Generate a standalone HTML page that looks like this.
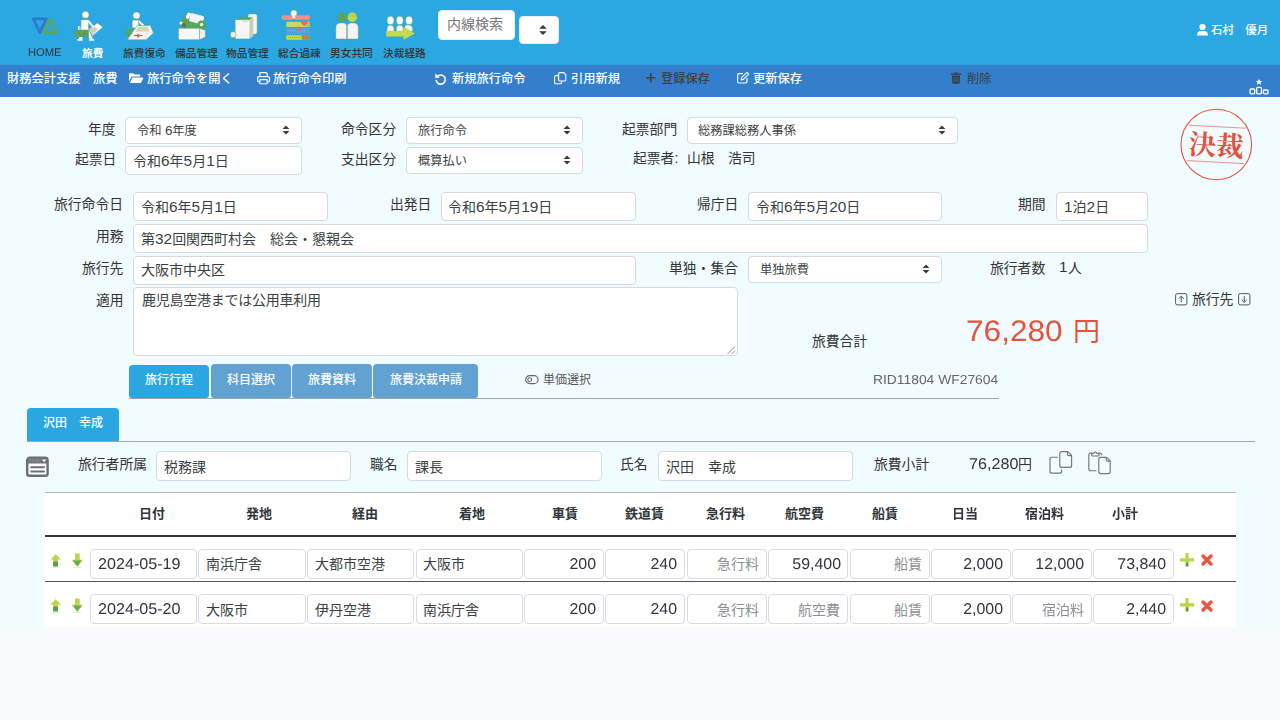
<!DOCTYPE html>
<html lang="ja"><head><meta charset="utf-8"><title>旅費 - 旅行命令</title><style>
html,body{margin:0;padding:0}
body{width:1280px;height:720px;overflow:hidden;position:relative;background:#f0fcff;font-family:"Liberation Sans",sans-serif}
.t{position:absolute;white-space:nowrap}
.t svg{position:absolute;left:0;top:0;display:block;overflow:visible}
.t svg text{font-family:"Liberation Sans","Noto Sans CJK JP",sans-serif;white-space:pre}
.t svg text.serif{font-family:"Liberation Serif","Noto Serif CJK SC",serif}
.a{will-change:transform}
.a text{text-rendering:geometricPrecision;white-space:pre}
.box{position:absolute;box-sizing:border-box;background:#fff;border:1px solid #d3dae0;border-radius:4px}
.tb{border-color:#d5dce4}
.i{position:absolute;display:block;overflow:visible}
</style></head>
<body>
<div style="position:absolute;left:0px;top:0px;width:1280px;height:65px;background:#2ba8e1;"></div>
<div style="position:absolute;left:0px;top:65px;width:1280px;height:32px;background:#337fcc;"></div>
<div style="position:absolute;left:0px;top:627px;width:1280px;height:93px;background:#f8fafc;"></div>
<svg class="i" style="left:28px;top:14px" width="34" height="24" viewBox="28 14 34 24" ><g fill="none" stroke-width="2.7" stroke-linejoin="round"><path d="M33.4 18.9H46.2L39.8 32.6Z" stroke="#2f78d0"/><path d="M50 19.4L56.7 32.7H43.3Z" stroke="#5aa75c"/></g></svg>
<svg class="i a" style="left:28.00px;top:56.30px" width="1" height="1"><text x="0" y="0" font-size="11.2" fill="#333" text-anchor="start">HOME</text></svg>
<div class="t " style="left:81.55px;top:46.50px;width:21.40px;height:13.91px;"><svg width="21.40" height="13.91" fill="#fff"><text x="0" y="10.16" font-size="10.7" font-weight="bold">旅費</text></svg></div>
<div class="t " style="left:122.60px;top:46.50px;width:42.80px;height:13.91px;"><svg width="42.80" height="13.91" fill="#333"><text x="0" y="10.16" font-size="10.7" font-weight="500">旅費復命</text></svg></div>
<div class="t " style="left:174.60px;top:46.50px;width:42.80px;height:13.91px;"><svg width="42.80" height="13.91" fill="#333"><text x="0" y="10.16" font-size="10.7" font-weight="500">備品管理</text></svg></div>
<div class="t " style="left:226.10px;top:46.50px;width:42.80px;height:13.91px;"><svg width="42.80" height="13.91" fill="#333"><text x="0" y="10.16" font-size="10.7" font-weight="500">物品管理</text></svg></div>
<div class="t " style="left:278.30px;top:46.50px;width:42.80px;height:13.91px;"><svg width="42.80" height="13.91" fill="#333"><text x="0" y="10.16" font-size="10.7" font-weight="500">総合過疎</text></svg></div>
<div class="t " style="left:330.10px;top:46.50px;width:42.80px;height:13.91px;"><svg width="42.80" height="13.91" fill="#333"><text x="0" y="10.16" font-size="10.7" font-weight="500">男女共同</text></svg></div>
<div class="t " style="left:382.60px;top:46.50px;width:42.80px;height:13.91px;"><svg width="42.80" height="13.91" fill="#333"><text x="0" y="10.16" font-size="10.7" font-weight="500">決裁経路</text></svg></div>
<svg class="i" style="left:70px;top:8px" width="350" height="35" viewBox="70 8 350 35" ><g><path d="M97.4 22.9L103 27.1L92.5 35.9L89 29.2Z" fill="#fbfbfb" stroke="#4f9d52" stroke-width="0.45"/><path d="M93.6 25.6L97.8 29.6L92.6 35.2L89.6 29.4Z" fill="#cfd1cf"/><path d="M91 28.4l4.4 4.6M92.6 27l4.2 4.4M90.6 31l4.6-4.6M92 33.2l4.8-4.8" stroke="#b9bbb9" stroke-width="0.35"/><circle cx="92.5" cy="30.5" r="0.75" fill="#d9e23c"/><path d="M84.6 29L80.2 39.4" stroke="#fafafa" stroke-width="3" stroke-linecap="butt"/><path d="M86.8 29L91.4 39.4" stroke="#fafafa" stroke-width="3" stroke-linecap="butt"/><path d="M77.4 39h5.2v1.8h-5.2zM89.2 39h5v1.8h-5z" fill="#fafafa"/><path d="M80.9 20.7q0-1 1-1h5.6q1.1 0 1.1 1.1v9.2h-7.7z" fill="#fafafa" stroke="#4f9d52" stroke-width="0.45"/><path d="M84 20.4v9" stroke="#dfe6df" stroke-width="0.4"/><path d="M88.6 21.4L93.4 27.2" stroke="#fafafa" stroke-width="2" stroke-linecap="round"/><circle cx="85.5" cy="14.8" r="3.55" fill="#fafafa" stroke="#4f9d52" stroke-width="0.45"/><path d="M78.4 30v-3q0-0.6 0.6-0.6h0.4q0.5 0 0.5 0.6v3" fill="none" stroke="#fafafa" stroke-width="0.9"/><rect x="74.6" y="29.9" width="14.2" height="7" rx="0.6" fill="#5ba55b"/><circle cx="79.5" cy="33.4" r="0.7" fill="#7d5b7a"/><circle cx="84.4" cy="33.4" r="0.7" fill="#7d5b7a"/></g><g><path d="M138.4 21L143.2 25.2" stroke="#fafafa" stroke-width="1.9" stroke-linecap="round"/><path d="M132.2 21q0-1 1-1h4.4q1 0 1 1v7h-6.4z" fill="#fafafa" stroke="#4f9d52" stroke-width="0.45"/><circle cx="136.5" cy="15.5" r="3.55" fill="#fafafa" stroke="#4f9d52" stroke-width="0.45"/><path d="M126.3 29.9L131.2 27.8L133.3 29.2L129.1 37L126.3 35.6Z" fill="#5ba55b"/><path d="M136.8 26L150.2 25.3L153.3 32.7L145.6 39.8H127.3Z" fill="#f6f6f6" stroke="#4f9d52" stroke-width="0.45"/><path d="M138 27.1L148 26.8L149.4 31.6L135.6 31.8Z" fill="#d3d5d3"/><circle cx="140.4" cy="27.9" r="0.6" fill="#d9e23c"/><circle cx="143.6" cy="27.7" r="0.6" fill="#d9e23c"/><circle cx="146.6" cy="27.6" r="0.6" fill="#d9e23c"/><circle cx="139.4" cy="30.4" r="0.6" fill="#d9e23c"/><circle cx="143.4" cy="30.2" r="0.6" fill="#d9e23c"/><circle cx="146" cy="29.2" r="0.6" fill="#d9e23c"/><circle cx="147.6" cy="30.4" r="0.6" fill="#d9e23c"/><circle cx="141.6" cy="29.2" r="0.6" fill="#d9e23c"/><path d="M145.6 39.8L145.8 33.6L153.3 32.7Z" fill="#fdfdfd" stroke="#c5c8c5" stroke-width="0.35"/><circle cx="147.2" cy="33.4" r="0.5" fill="#d9e23c"/><path d="M138.2 33.2l0.8 1.5 3.6 0.5v0.7l-3.6 0.4-0.5 1.4h-0.8l-0.4-1.4-3.4-0.4v-0.7l3.4-0.5z" fill="#e8533c"/></g><g><path d="M179.8 26.6q-0.4-4 2.6-7.4 2.2-3.4 5-5.6l4.4-1.4 11 5.2 0.6 5 2.4 2.2v3.4l-5 0.8z" fill="#5ba55b"/><ellipse cx="188.3" cy="15.8" rx="2" ry="3.3" transform="rotate(24 188.3 15.8)" fill="#fdfdfd"/><rect x="189.6" y="14.4" width="14" height="8.6" rx="1.6" transform="rotate(15 196.6 18.7)" fill="#f3f3f3"/><circle cx="201.6" cy="24.6" r="4.1" fill="#5ba55b"/><circle cx="201.6" cy="24.6" r="1.7" fill="#fdfdfd"/><circle cx="180.9" cy="22.9" r="1.5" fill="#fdfdfd"/><circle cx="184" cy="25.3" r="2.1" fill="#5f6361"/><circle cx="184" cy="25.3" r="0.8" fill="#8a8d8a"/><rect x="178.4" y="28.2" width="21.1" height="11.6" fill="#f7f7f7" stroke="#4f9d52" stroke-width="0.45"/><path d="M199.5 28.2L205.5 30.3V36.9L199.5 39.8Z" fill="#ededed" stroke="#4f9d52" stroke-width="0.45"/><path d="M199.5 28.2V39.8" stroke="#b5b8b5" stroke-width="0.5"/></g><g><rect x="248" y="14.1" width="9.2" height="20.2" rx="2.2" fill="#f4f4f4" stroke="#4f9d52" stroke-width="0.45"/><ellipse cx="252.6" cy="15.6" rx="4" ry="1.3" fill="#fdfdfd" stroke="#d2d5d2" stroke-width="0.3"/><path d="M235.4 20L239.3 17.3H253L249.5 20Z" fill="#5ba55b"/><path d="M249.5 20L253.3 17.5V36L249.5 38.7Z" fill="#c9cbc9"/><circle cx="251.4" cy="19.6" r="0.55" fill="#d9e23c"/><circle cx="251.4" cy="21.6" r="0.55" fill="#d9e23c"/><circle cx="251.4" cy="23.6" r="0.55" fill="#d9e23c"/><circle cx="251.4" cy="25.6" r="0.55" fill="#d9e23c"/><circle cx="251.4" cy="27.6" r="0.55" fill="#d9e23c"/><circle cx="251.4" cy="29.6" r="0.55" fill="#d9e23c"/><circle cx="251.4" cy="31.6" r="0.55" fill="#d9e23c"/><circle cx="251.4" cy="33.6" r="0.55" fill="#d9e23c"/><circle cx="251.4" cy="35.6" r="0.55" fill="#d9e23c"/><rect x="235.4" y="20" width="14.1" height="18.7" fill="#f7f7f7" stroke="#c9ccc9" stroke-width="0.4"/><path d="M242.4 21.4h6" stroke="#a9c6e2" stroke-width="0.7"/><path d="M237 23h2" stroke="#c9ccc9" stroke-width="0.4"/><path d="M236.4 35.4h12" stroke="#dcdedc" stroke-width="0.4"/><rect x="230.5" y="31.8" width="5.4" height="5.8" rx="1.8" fill="#efefef" stroke="#4f9d52" stroke-width="0.45"/></g><g><rect x="282" y="15.5" width="27.8" height="4.2" fill="#ee9189" stroke="#b9a3a0" stroke-width="0.4"/><path d="M282.4 20V38.4H286" fill="none" stroke="#4f9d52" stroke-width="0.7" stroke-dasharray="0.9 0.9"/><path d="M282.4 24.4h4M282.4 31h4" stroke="#4f9d52" stroke-width="0.7" stroke-dasharray="0.9 0.9"/><rect x="286.3" y="21.8" width="23.5" height="5.3" rx="1.2" fill="#c6dc56"/><path d="M306 21.8h3.8v5.3H306z" fill="#a8cf3c"/><rect x="286.3" y="28.2" width="23.5" height="5.6" rx="1.2" fill="#5f9fd9"/><path d="M288 31h20" stroke="#8fbde8" stroke-width="0.7" stroke-dasharray="1 2.2"/><rect x="286.3" y="35.2" width="23.5" height="4.6" rx="1" fill="#c8de3e"/><path d="M301.7 35.2h7.1q1 0 1 1v2.6q0 1-1 1h-7.1z" fill="#5aa85a"/><path d="M288 37.5h12.6" stroke="#7fb53e" stroke-width="1" stroke-dasharray="1.1 0.9"/><circle cx="293.8" cy="13.3" r="3" fill="#fbfbfb" stroke="#b7d24a" stroke-width="0.5"/><path d="M292.4 16h2.8v2.6h-2.8z" fill="#fbfbfb"/><path d="M292.6 18.8h2.4l-1.2 1.8z" fill="#4f9d52"/><path d="M304.2 26.2l-2.9-2.7q-0.8-1.7 0.7-2.4 1.3-0.3 2.2 1 0.9-1.3 2.2-1 1.5 0.7 0.7 2.4z" fill="#ee6a60"/><path d="M298.9 26.8l0.9 1.9 2 0.9-2 0.9-0.9 1.9-0.9-1.9-2-0.9 2-0.9z" fill="#ee6a60"/><path d="M305.4 34.4l2.8 3.1-2.8 3.1-2.8-3.1z" fill="#ee6a60"/></g><g><circle cx="342.5" cy="17.25" r="4.65" fill="#5ba55b"/><circle cx="352.4" cy="17.25" r="4.65" fill="#c9de4a"/><path d="M348.6 17.4l3.8-4.2M349.6 19.4l5.2-5.8M351.2 20.8l5-5.6M353.6 21.4l3-3.4M348.8 15l2.4 2.4M351 13.4l4.6 4.6M353.6 13.4l3 3" stroke="#9fc63a" stroke-width="0.6"/><path d="M335.8 39V27.6q0-4.7 4.7-4.7h2.6q3.6 0 3.6 3.2V39Z" fill="#f4f4f4" stroke="#4f9d52" stroke-width="0.45"/><path d="M347.4 39V26.1q0-3.2 3.6-3.2h2.6q4.7 0 4.7 4.7V39Z" fill="#f4f4f4" stroke="#4f9d52" stroke-width="0.45"/><path d="M347.05 25V39" stroke="#bfc2bf" stroke-width="0.6"/></g><g><path d="M387 31.6v-3.4q0-2.4 2.2-2.9h2.6q2.2 0.5 2.2 2.9v3.4z" fill="#f4f4f4" stroke="#4f9d52" stroke-width="0.45"/><ellipse cx="390.5" cy="20.4" rx="3.5" ry="4.2" fill="#f6f6f6" stroke="#4f9d52" stroke-width="0.45"/><path d="M396.25 31.6v-3.4q0-2.4 2.2-2.9h2.6q2.2 0.5 2.2 2.9v3.4z" fill="#f4f4f4" stroke="#4f9d52" stroke-width="0.45"/><ellipse cx="399.75" cy="20.4" rx="3.5" ry="4.2" fill="#f6f6f6" stroke="#4f9d52" stroke-width="0.45"/><path d="M405.6 31.6v-3.4q0-2.4 2.2-2.9h2.6q2.2 0.5 2.2 2.9v3.4z" fill="#f4f4f4" stroke="#4f9d52" stroke-width="0.45"/><ellipse cx="409.1" cy="20.4" rx="3.5" ry="4.2" fill="#f6f6f6" stroke="#4f9d52" stroke-width="0.45"/><path d="M405.6 25.3h2.6q2.2 0.5 2.2 2.9v5h-7z" fill="#f4f4f4"/><path d="M386.25 31H403.6V27.1L414.8 33.5L403.6 39.8V36.6H386.25Z" fill="#c4db50" stroke="#a9c83c" stroke-width="0.3"/></g></svg>
<div class="box" style="left:438px;top:10px;width:76.5px;height:30px;border-color:#e8eef2;"></div>
<div class="t " style="left:447.00px;top:16.22px;width:56.00px;height:18.20px;"><svg width="56.00" height="18.20" fill="#777"><text x="0" y="13.3" font-size="14">内線検索</text></svg></div>
<div class="box" style="left:519px;top:16px;width:40px;height:28px;border-color:#e8eef2;"></div>
<svg class="i" style="left:536.75px;top:22.3px" width="12" height="16" viewBox="536.75 22.3 12 16" ><path d="M542.75 25.4L546.55 29.1H538.95ZM542.75 35.2L546.55 31.5H538.95Z" fill="#343a40"/></svg>
<svg class="i" style="left:1197px;top:24.4px" width="11" height="11.6" viewBox="0 0 11 11.6" ><circle cx="5.5" cy="3.1" r="3.1" fill="#fff"/><path d="M0 11.6q0-4.4 3.6-4.6h3.8q3.6 0.2 3.6 4.6z" fill="#fff"/></svg>
<div class="t " style="left:1210.60px;top:22.77px;width:57.25px;height:14.88px;"><svg width="57.25" height="14.88" fill="#fff"><text x="0" y="10.88" font-size="11.45" font-weight="500">石村　優月</text></svg></div>
<div class="t " style="left:7.40px;top:70.92px;width:73.50px;height:15.93px;"><svg width="73.50" height="15.93" fill="#fff"><text x="0" y="11.64" font-size="12.25" font-weight="500">財務会計支援</text></svg></div>
<div class="t " style="left:92.60px;top:70.92px;width:24.50px;height:15.93px;"><svg width="24.50" height="15.93" fill="#fff"><text x="0" y="11.64" font-size="12.25" font-weight="500">旅費</text></svg></div>
<svg class="i" style="left:129px;top:73px" width="14.4" height="10.2" viewBox="0 0 14.4 10.2" ><path d="M0 1.3q0-1.1 1.1-1.1h3.1l1.3 1.3h4.6q1.1 0 1.1 1.1v0.9H3.6q-0.9 0-1.3 0.8L0 8.6z" fill="#fff"/><path d="M3.6 4.6h10.2q0.7 0 0.4 0.7l-2 4.2q-0.3 0.6-1 0.6H0.8z" fill="#fff"/></svg>
<div class="t " style="left:147.10px;top:70.92px;width:85.75px;height:15.93px;"><svg width="85.75" height="15.93" fill="#fff"><text x="0" y="11.64" font-size="12.25" font-weight="500">旅行命令を開く</text></svg></div>
<svg class="i" style="left:257px;top:72px" width="13.2" height="12.4" viewBox="0 0 13.2 12.4" ><g fill="none" stroke="#fff" stroke-width="1.15" stroke-linejoin="round"><path d="M2.9 4.6V0.6h6.2l1.1 1.1v2.9"/><path d="M2.9 9.6H1.2q-0.6 0-0.6-0.6V5.8q0-1.2 1.2-1.2h9.5q1.2 0 1.2 1.2V9q0 0.6-0.6 0.6h-1.7"/><rect x="2.9" y="7.6" width="7.3" height="4.2"/></g></svg>
<div class="t " style="left:273.40px;top:70.92px;width:73.50px;height:15.93px;"><svg width="73.50" height="15.93" fill="#fff"><text x="0" y="11.64" font-size="12.25" font-weight="500">旅行命令印刷</text></svg></div>
<svg class="i" style="left:435px;top:72.5px" width="11.4" height="11.6" viewBox="0 0 11.4 11.6" ><path d="M2.3 3.4A4.6 4.6 0 1 1 1.2 7.6" fill="none" stroke="#fff" stroke-width="1.6" stroke-linecap="round"/><path d="M0.2 0.4L0.4 5.2L5 4.6Z" fill="#fff"/></svg>
<div class="t " style="left:451.60px;top:70.92px;width:73.50px;height:15.93px;"><svg width="73.50" height="15.93" fill="#fff"><text x="0" y="11.64" font-size="12.25" font-weight="500">新規旅行命令</text></svg></div>
<svg class="i" style="left:553.5px;top:72px" width="12.6" height="12.4" viewBox="0 0 12.6 12.4" ><g fill="none" stroke="#fff" stroke-width="1.1"><path d="M4.4 3.6H1.9q-1.3 0-1.3 1.3v5.5q0 1.3 1.3 1.3h4.4q1.3 0 1.3-1.3V9.6"/><path d="M5.9 0.6h3.7l2.2 2.2v4.9q0 1.3-1.3 1.3H5.9q-1.3 0-1.3-1.3V1.9q0-1.3 1.3-1.3z"/></g></svg>
<div class="t " style="left:570.60px;top:70.92px;width:49.00px;height:15.93px;"><svg width="49.00" height="15.93" fill="#fff"><text x="0" y="11.64" font-size="12.25" font-weight="500">引用新規</text></svg></div>
<svg class="i" style="left:646px;top:73.3px" width="9.6" height="9.4" viewBox="0 0 9.6 9.4" ><path d="M0 4.7h9.6M4.8 0v9.4" stroke="#3d4044" stroke-width="1.6"/></svg>
<div class="t " style="left:661.10px;top:70.92px;width:49.00px;height:15.93px;"><svg width="49.00" height="15.93" fill="#3d4044"><text x="0" y="11.64" font-size="12.25" font-weight="500">登録保存</text></svg></div>
<svg class="i" style="left:736.5px;top:72.3px" width="11.8" height="11.8" viewBox="0 0 11.8 11.8" ><path d="M5.4 1.6H2q-1.4 0-1.4 1.4v6.6q0 1.4 1.4 1.4h6.6q1.4 0 1.4-1.4V6.4" fill="none" stroke="#fff" stroke-width="1.2" stroke-linecap="round"/><path d="M4.6 5.6L9.4 0.8q0.7-0.6 1.4 0.1l0.4 0.4q0.6 0.7 0 1.4L6.4 7.4l-2.2 0.5z" fill="none" stroke="#fff" stroke-width="1.1" stroke-linejoin="round"/></svg>
<div class="t " style="left:752.60px;top:70.92px;width:49.00px;height:15.93px;"><svg width="49.00" height="15.93" fill="#fff"><text x="0" y="11.64" font-size="12.25" font-weight="500">更新保存</text></svg></div>
<svg class="i" style="left:951px;top:72px" width="10" height="11.8" viewBox="0 0 10 11.8" ><path d="M0 1.6h3l0.5-1.2h3l0.5 1.2h3v1.2H0z" fill="#3a3d42"/><path d="M0.9 3.6h8.2l-0.4 7q-0.1 1.2-1.3 1.2H2.6q-1.2 0-1.3-1.2z" fill="#3a3d42"/><path d="M3.1 5v5M5 5v5M6.9 5v5" stroke="#337fcc" stroke-width="0.6"/></svg>
<div class="t " style="left:966.60px;top:70.92px;width:24.50px;height:15.93px;"><svg width="24.50" height="15.93" fill="#3a3d42"><text x="0" y="11.64" font-size="12.25">削除</text></svg></div>
<svg class="i" style="left:1248.5px;top:78.5px" width="20" height="16" viewBox="0 0 20 16" ><path d="M10 0l1 2 2.2 0.2-1.7 1.4 0.5 2.1-2-1.1-2 1.1 0.5-2.1-1.7-1.4 2.2-0.2z" fill="#fff"/><g fill="none" stroke="#fff" stroke-width="1.3"><rect x="1.1" y="10" width="4.6" height="4.8" rx="1"/><rect x="7.7" y="8.4" width="4.8" height="6.4" rx="1"/><rect x="14.4" y="11" width="4.6" height="3.8" rx="1"/></g></svg>
<div class="t " style="left:87.70px;top:120.73px;width:27.60px;height:17.94px;"><svg width="27.60" height="17.94" fill="#333"><text x="0" y="13.11" font-size="13.8">年度</text></svg></div>
<div class="box" style="left:125px;top:116.5px;width:177px;height:27px;"></div>
<div class="t " style="left:136.80px;top:122.02px;width:60.18px;height:17.42px;"><svg width="60.18" height="17.42" fill="#3a3f44"><text x="0" y="12.73" font-size="12.25">令和 <tspan font-size="13.4">6</tspan>年度</text></svg></div>
<svg class="i" style="left:280.25px;top:121.8px" width="12" height="16" viewBox="280.25 121.8 12 16" ><path d="M286.25 125.39L289.67 128.72H282.83ZM286.25 134.21L289.67 130.88H282.83Z" fill="#343a40"/></svg>
<div class="t " style="left:74.50px;top:150.93px;width:41.40px;height:17.94px;"><svg width="41.40" height="17.94" fill="#333"><text x="0" y="13.11" font-size="13.8">起票日</text></svg></div>
<div class="box" style="left:125px;top:146px;width:177px;height:29px;"></div>
<div class="t " style="left:132.60px;top:150.79px;width:95.69px;height:20.02px;"><svg width="95.69" height="20.02" fill="#3a3f44"><text x="0" y="14.63" font-size="14">令和<tspan font-size="15.4">6</tspan>年<tspan font-size="15.4">5</tspan>月<tspan font-size="15.4">1</tspan>日</text></svg></div>
<div class="t " style="left:340.70px;top:120.93px;width:55.20px;height:17.94px;"><svg width="55.20" height="17.94" fill="#333"><text x="0" y="13.11" font-size="13.8">命令区分</text></svg></div>
<div class="box" style="left:406px;top:116.5px;width:176.5px;height:27px;"></div>
<div class="t " style="left:417.80px;top:122.02px;width:49.00px;height:17.42px;"><svg width="49.00" height="17.42" fill="#3a3f44"><text x="0" y="12.73" font-size="12.25">旅行命令</text></svg></div>
<svg class="i" style="left:560.75px;top:121.8px" width="12" height="16" viewBox="560.75 121.8 12 16" ><path d="M566.75 125.39L570.17 128.72H563.33ZM566.75 134.21L570.17 130.88H563.33Z" fill="#343a40"/></svg>
<div class="t " style="left:340.70px;top:150.73px;width:55.20px;height:17.94px;"><svg width="55.20" height="17.94" fill="#333"><text x="0" y="13.11" font-size="13.8">支出区分</text></svg></div>
<div class="box" style="left:406px;top:146.5px;width:176.5px;height:27px;"></div>
<div class="t " style="left:417.80px;top:152.03px;width:49.00px;height:17.42px;"><svg width="49.00" height="17.42" fill="#3a3f44"><text x="0" y="12.73" font-size="12.25">概算払い</text></svg></div>
<svg class="i" style="left:560.75px;top:151.8px" width="12" height="16" viewBox="560.75 151.8 12 16" ><path d="M566.75 155.39L570.17 158.72H563.33ZM566.75 164.21L570.17 160.88H563.33Z" fill="#343a40"/></svg>
<div class="t " style="left:621.60px;top:120.93px;width:55.20px;height:17.94px;"><svg width="55.20" height="17.94" fill="#333"><text x="0" y="13.11" font-size="13.8">起票部門</text></svg></div>
<div class="box" style="left:686.5px;top:116.5px;width:271px;height:27px;"></div>
<div class="t " style="left:698.30px;top:122.02px;width:98.00px;height:17.42px;"><svg width="98.00" height="17.42" fill="#3a3f44"><text x="0" y="12.73" font-size="12.25">総務課総務人事係</text></svg></div>
<svg class="i" style="left:935.75px;top:121.8px" width="12" height="16" viewBox="935.75 121.8 12 16" ><path d="M941.75 125.39L945.17 128.72H938.33ZM941.75 134.21L945.17 130.88H938.33Z" fill="#343a40"/></svg>
<div class="t " style="left:632.87px;top:150.43px;width:45.23px;height:17.94px;"><svg width="45.23" height="17.94" fill="#333"><text x="0" y="13.11" font-size="13.8">起票者:</text></svg></div>
<div class="t " style="left:687.00px;top:150.43px;width:27.60px;height:17.94px;"><svg width="27.60" height="17.94" fill="#333"><text x="0" y="13.11" font-size="13.8">山根</text></svg></div>
<div class="t " style="left:727.60px;top:150.43px;width:27.60px;height:17.94px;"><svg width="27.60" height="17.94" fill="#333"><text x="0" y="13.11" font-size="13.8">浩司</text></svg></div>
<div class="t " style="left:53.90px;top:196.43px;width:69.00px;height:17.94px;"><svg width="69.00" height="17.94" fill="#333"><text x="0" y="13.11" font-size="13.8">旅行命令日</text></svg></div>
<div class="box" style="left:133px;top:192px;width:195px;height:29px;"></div>
<div class="t " style="left:140.60px;top:196.79px;width:95.69px;height:20.02px;"><svg width="95.69" height="20.02" fill="#3a3f44"><text x="0" y="14.63" font-size="14">令和<tspan font-size="15.4">6</tspan>年<tspan font-size="15.4">5</tspan>月<tspan font-size="15.4">1</tspan>日</text></svg></div>
<div class="t " style="left:389.90px;top:196.43px;width:41.40px;height:17.94px;"><svg width="41.40" height="17.94" fill="#333"><text x="0" y="13.11" font-size="13.8">出発日</text></svg></div>
<div class="box" style="left:440.75px;top:192px;width:194.75px;height:29px;"></div>
<div class="t " style="left:448.35px;top:196.79px;width:104.26px;height:20.02px;"><svg width="104.26" height="20.02" fill="#3a3f44"><text x="0" y="14.63" font-size="14">令和<tspan font-size="15.4">6</tspan>年<tspan font-size="15.4">5</tspan>月<tspan font-size="15.4">19</tspan>日</text></svg></div>
<div class="t " style="left:697.30px;top:196.43px;width:41.40px;height:17.94px;"><svg width="41.40" height="17.94" fill="#333"><text x="0" y="13.11" font-size="13.8">帰庁日</text></svg></div>
<div class="box" style="left:748px;top:192px;width:194px;height:29px;"></div>
<div class="t " style="left:755.60px;top:196.79px;width:104.26px;height:20.02px;"><svg width="104.26" height="20.02" fill="#3a3f44"><text x="0" y="14.63" font-size="14">令和<tspan font-size="15.4">6</tspan>年<tspan font-size="15.4">5</tspan>月<tspan font-size="15.4">20</tspan>日</text></svg></div>
<div class="t " style="left:1017.70px;top:196.43px;width:27.60px;height:17.94px;"><svg width="27.60" height="17.94" fill="#333"><text x="0" y="13.11" font-size="13.8">期間</text></svg></div>
<div class="box" style="left:1055.5px;top:192px;width:92px;height:29px;"></div>
<div class="t " style="left:1064.40px;top:196.79px;width:45.13px;height:20.02px;"><svg width="45.13" height="20.02" fill="#3a3f44"><text x="0" y="14.63" font-size="14"><tspan font-size="15.4">1</tspan>泊<tspan font-size="15.4">2</tspan>日</text></svg></div>
<div class="t " style="left:95.70px;top:228.43px;width:27.60px;height:17.94px;"><svg width="27.60" height="17.94" fill="#333"><text x="0" y="13.11" font-size="13.8">用務</text></svg></div>
<div class="box" style="left:133px;top:224px;width:1014.5px;height:29px;"></div>
<div class="t " style="left:140.60px;top:228.79px;width:213.13px;height:20.02px;"><svg width="213.13" height="20.02" fill="#3a3f44"><text x="0" y="14.63" font-size="14">第<tspan font-size="15.4">32</tspan>回関西町村会　総会・懇親会</text></svg></div>
<div class="t " style="left:81.90px;top:259.63px;width:41.40px;height:17.94px;"><svg width="41.40" height="17.94" fill="#333"><text x="0" y="13.11" font-size="13.8">旅行先</text></svg></div>
<div class="box" style="left:133px;top:255.5px;width:502.5px;height:29px;"></div>
<div class="t " style="left:140.60px;top:260.29px;width:84.00px;height:20.02px;"><svg width="84.00" height="20.02" fill="#3a3f44"><text x="0" y="14.63" font-size="14">大阪市中央区</text></svg></div>
<div class="t " style="left:668.90px;top:259.63px;width:69.00px;height:17.94px;"><svg width="69.00" height="17.94" fill="#333"><text x="0" y="13.11" font-size="13.8">単独・集合</text></svg></div>
<div class="box" style="left:748px;top:255.5px;width:194px;height:27px;"></div>
<div class="t " style="left:759.80px;top:261.02px;width:49.00px;height:17.42px;"><svg width="49.00" height="17.42" fill="#3a3f44"><text x="0" y="12.73" font-size="12.25">単独旅費</text></svg></div>
<svg class="i" style="left:920.25px;top:260.8px" width="12" height="16" viewBox="920.25 260.8 12 16" ><path d="M926.25 264.39L929.67 267.72H922.83ZM926.25 273.21L929.67 269.88H922.83Z" fill="#343a40"/></svg>
<div class="t " style="left:990.10px;top:259.73px;width:55.20px;height:17.94px;"><svg width="55.20" height="17.94" fill="#333"><text x="0" y="13.11" font-size="13.8">旅行者数</text></svg></div>
<div class="t " style="left:1058.60px;top:258.48px;width:8.45px;height:19.76px;"><svg width="8.45" height="19.76" fill="#333"><text x="0" y="14.44" font-size="15.2">1</text></svg></div>
<div class="t " style="left:1067.60px;top:259.73px;width:13.80px;height:17.94px;"><svg width="13.80" height="17.94" fill="#333"><text x="0" y="13.11" font-size="13.8">人</text></svg></div>
<div class="t " style="left:96.30px;top:291.83px;width:27.60px;height:17.94px;"><svg width="27.60" height="17.94" fill="#333"><text x="0" y="13.11" font-size="13.8">適用</text></svg></div>
<div class="box" style="left:133px;top:287px;width:604.5px;height:69px;"></div>
<div class="t " style="left:141.60px;top:292.42px;width:179.12px;height:18.20px;"><svg width="179.12" height="18.20" fill="#3a3f44"><text x="0" y="13.3" font-size="14" textLength="178.88" lengthAdjust="spacing">鹿児島空港までは公用車利用</text></svg></div>
<svg class="i" style="left:727px;top:346px" width="8.4" height="8.4" viewBox="0 0 8.4 8.4" ><path d="M8 0.6L0.6 8M8 4.6L4.6 8" stroke="#7a7a7a" stroke-width="0.9"/></svg>
<div class="t" style="left:1180px;top:108px;width:73px;height:73px"><svg class="i" style="left:0px;top:0px" width="73" height="73" viewBox="1180 108 73 73" ><circle cx="1216.3" cy="144.5" r="35.3" fill="none" stroke="#e0523d" stroke-width="1.1"/><g transform="rotate(3 1216.3 144.5)" fill="#e0523d"><path d="M1187.7 126.7H1244.9M1187.7 162.1H1244.9" stroke="#e0523d" stroke-width="0.8" opacity="0.75"/><text class="serif" x="1188.8" y="155.15" font-size="27.5" font-weight="bold">決裁</text></g></svg></div>
<svg class="i" style="left:1175px;top:293px" width="12.5" height="12.5" viewBox="0 0 12.5 12.5" ><rect x="0.6" y="0.6" width="11.3" height="11.3" rx="1.8" fill="none" stroke="#555" stroke-width="1"/><path d="M6.25 9.4V3.4M3.6 5.8L6.25 3.2L8.9 5.8" fill="none" stroke="#555" stroke-width="1"/></svg>
<div class="t " style="left:1192.00px;top:291.43px;width:41.40px;height:17.94px;"><svg width="41.40" height="17.94" fill="#333"><text x="0" y="13.11" font-size="13.8">旅行先</text></svg></div>
<svg class="i" style="left:1237.5px;top:293px" width="12.5" height="12.5" viewBox="0 0 12.5 12.5" ><rect x="0.6" y="0.6" width="11.3" height="11.3" rx="1.8" fill="none" stroke="#555" stroke-width="1"/><path d="M6.25 3.2V9.2M3.6 6.8L6.25 9.4L8.9 6.8" fill="none" stroke="#555" stroke-width="1"/></svg>
<div class="t " style="left:811.60px;top:332.93px;width:55.20px;height:17.94px;"><svg width="55.20" height="17.94" fill="#333"><text x="0" y="13.11" font-size="13.8">旅費合計</text></svg></div>
<svg class="i a" style="left:965.60px;top:340.60px" width="1" height="1"><text x="0" y="0" font-size="29.7" fill="#e5533d" text-anchor="start" transform="scale(1.065,1)">76,280</text></svg>
<div class="t " style="left:1072.80px;top:314.55px;width:27.00px;height:35.10px;"><svg width="27.00" height="35.10" fill="#e5533d"><text x="0" y="25.65" font-size="27">円</text></svg></div>
<div style="position:absolute;left:129px;top:398.2px;width:869.75px;height:1.2px;background:#9fa3a6;"></div>
<div style="position:absolute;left:129px;top:364.5px;width:80px;height:33.8px;background:#2aa7e0;border-radius:4px 4px 3px 3px;"></div>
<div class="t " style="left:145.00px;top:373.46px;width:48.00px;height:15.60px;"><svg width="48.00" height="15.60" fill="#fff"><text x="0" y="11.4" font-size="12" font-weight="500">旅行行程</text></svg></div>
<div style="position:absolute;left:211px;top:363.75px;width:79.75px;height:34.55px;background:#62a2d2;border-radius:4px 4px 3px 3px;"></div>
<div class="t " style="left:226.88px;top:373.46px;width:48.00px;height:15.60px;"><svg width="48.00" height="15.60" fill="#fff"><text x="0" y="11.4" font-size="12" font-weight="500">科目選択</text></svg></div>
<div style="position:absolute;left:292px;top:363.75px;width:80px;height:34.55px;background:#62a2d2;border-radius:4px 4px 3px 3px;"></div>
<div class="t " style="left:308.00px;top:373.46px;width:48.00px;height:15.60px;"><svg width="48.00" height="15.60" fill="#fff"><text x="0" y="11.4" font-size="12" font-weight="500">旅費資料</text></svg></div>
<div style="position:absolute;left:373.25px;top:363.75px;width:104.75px;height:34.55px;background:#62a2d2;border-radius:4px 4px 3px 3px;"></div>
<div class="t " style="left:389.62px;top:373.46px;width:72.00px;height:15.60px;"><svg width="72.00" height="15.60" fill="#fff"><text x="0" y="11.4" font-size="12" font-weight="500">旅費決裁申請</text></svg></div>
<svg class="i" style="left:525px;top:374.5px" width="13.8" height="9.3" viewBox="0 0 13.8 9.3" ><rect x="0.7" y="0.7" width="12.4" height="7.9" rx="3.95" fill="none" stroke="#666" stroke-width="1.2"/><circle cx="4.7" cy="4.65" r="1.9" fill="none" stroke="#666" stroke-width="1.1"/></svg>
<div class="t " style="left:542.60px;top:372.76px;width:48.00px;height:15.60px;"><svg width="48.00" height="15.60" fill="#555"><text x="0" y="11.4" font-size="12">単価選択</text></svg></div>
<svg class="i a" style="left:872.60px;top:384.10px" width="1" height="1"><text x="0" y="0" font-size="13" fill="#666" text-anchor="start" transform="scale(1.065,1)">RID11804 WF27604</text></svg>
<div style="position:absolute;left:27px;top:407.5px;width:91.75px;height:34px;background:#2aa7e0;border-radius:4px 4px 0 0;"></div>
<div class="t " style="left:42.60px;top:416.36px;width:60.00px;height:15.60px;"><svg width="60.00" height="15.60" fill="#fff"><text x="0" y="11.4" font-size="12" font-weight="500">沢田　幸成</text></svg></div>
<div style="position:absolute;left:27px;top:441px;width:1227.5px;height:1.2px;background:#a3a7aa;"></div>
<svg class="i" style="left:26px;top:456px" width="22.8" height="21" viewBox="0 0 22.8 21" ><rect x="1.2" y="1.8" width="20.4" height="18" rx="2.4" fill="#fff" stroke="#6b6e71" stroke-width="2.4"/><path d="M1.2 7.4V4.2q0-2.4 2.4-2.4h15.6q2.4 0 2.4 2.4v3.2z" fill="#6b6e71"/><path d="M15.6 3.6h5l-2.5 2.6z" fill="#f2f2f2"/><path d="M2.6 3.2h12M3.2 4.6h11M2.6 6h12" stroke="#b5b7b9" stroke-width="0.7" stroke-dasharray="0.8 0.8"/><path d="M5.2 11.2h12.8M5.2 15.4h12.8" stroke="#6b6e71" stroke-width="2" stroke-linecap="round"/></svg>
<div class="t " style="left:77.90px;top:455.73px;width:69.00px;height:17.94px;"><svg width="69.00" height="17.94" fill="#333"><text x="0" y="13.11" font-size="13.8">旅行者所属</text></svg></div>
<div class="box" style="left:156px;top:451.25px;width:194.5px;height:29.25px;"></div>
<div class="t " style="left:163.60px;top:456.84px;width:42.00px;height:20.02px;"><svg width="42.00" height="20.02" fill="#3a3f44"><text x="0" y="14.63" font-size="14">税務課</text></svg></div>
<div class="t " style="left:369.50px;top:455.73px;width:27.60px;height:17.94px;"><svg width="27.60" height="17.94" fill="#333"><text x="0" y="13.11" font-size="13.8">職名</text></svg></div>
<div class="box" style="left:407px;top:451.25px;width:195px;height:29.25px;"></div>
<div class="t " style="left:414.60px;top:456.84px;width:28.00px;height:20.02px;"><svg width="28.00" height="20.02" fill="#3a3f44"><text x="0" y="14.63" font-size="14">課長</text></svg></div>
<div class="t " style="left:620.20px;top:455.73px;width:27.60px;height:17.94px;"><svg width="27.60" height="17.94" fill="#333"><text x="0" y="13.11" font-size="13.8">氏名</text></svg></div>
<div class="box" style="left:658px;top:451.25px;width:194.5px;height:29.25px;"></div>
<div class="t " style="left:665.60px;top:456.84px;width:70.00px;height:20.02px;"><svg width="70.00" height="20.02" fill="#3a3f44"><text x="0" y="14.63" font-size="14">沢田　幸成</text></svg></div>
<div class="t " style="left:873.80px;top:455.93px;width:55.20px;height:17.94px;"><svg width="55.20" height="17.94" fill="#333"><text x="0" y="13.11" font-size="13.8">旅費小計</text></svg></div>
<svg class="i a" style="left:968.80px;top:468.50px" width="1" height="1"><text x="0" y="0" font-size="15.6" fill="#333" text-anchor="start" transform="scale(1.035,1)">76,280</text></svg>
<div class="t " style="left:1017.60px;top:455.70px;width:14.00px;height:18.20px;"><svg width="14.00" height="18.20" fill="#333"><text x="0" y="13.3" font-size="14">円</text></svg></div>
<svg class="i" style="left:1048.75px;top:451.25px" width="23.4" height="22.8" viewBox="0 0 23.4 22.8" ><g fill="none" stroke="#74777a" stroke-width="1.15" stroke-linecap="round" stroke-linejoin="round"><path d="M8.4 6.2H3q-2 0-2 2v12q0 2 2 2h7.6q2 0 2-2v-1.4"/><path d="M12.8 0.6h6l3.8 3.8v10q0 2-2 2h-7.8q-2 0-2-2V2.6q0-2 2-2z"/><path d="M18.4 0.8v2.4q0 1.4 1.4 1.4h2.6"/></g></svg>
<svg class="i" style="left:1087.5px;top:452px" width="23" height="22.2" viewBox="0 0 23 22.2" ><g fill="none" stroke="#74777a" stroke-width="1.15" stroke-linecap="round" stroke-linejoin="round"><path d="M8 18.8H2.8q-2 0-2-2V3.2q0-2 2-2h1.4M10.4 1.2h1.4q1.6 0 2 1.6"/><path d="M3.6 3q0-1.6 1.6-1.6 0.8 0 1-0.8 1.2-1 2.4 0 0.2 0.8 1 0.8 1.6 0 1.6 1.6 0 1-1 1H4.6q-1 0-1-1z"/><path d="M12.8 5.4h5.8l3.6 3.6v10.6q0 2-2 2h-7.4q-2 0-2-2V7.4q0-2 2-2z"/><path d="M18.2 5.6v2.2q0 1.4 1.4 1.4h2.4"/></g></svg>
<div style="position:absolute;left:45px;top:492px;width:1191px;height:135px;background:#fff;border-top:1.4px solid #b0b4b6;box-sizing:border-box;"></div>
<div class="t " style="left:139.25px;top:505.99px;width:26.00px;height:16.90px;"><svg width="26.00" height="16.90" fill="#30353a"><text x="0" y="12.35" font-size="13" font-weight="bold">日付</text></svg></div>
<div class="t " style="left:245.75px;top:505.99px;width:26.00px;height:16.90px;"><svg width="26.00" height="16.90" fill="#30353a"><text x="0" y="12.35" font-size="13" font-weight="bold">発地</text></svg></div>
<div class="t " style="left:352.25px;top:505.99px;width:26.00px;height:16.90px;"><svg width="26.00" height="16.90" fill="#30353a"><text x="0" y="12.35" font-size="13" font-weight="bold">経由</text></svg></div>
<div class="t " style="left:459.00px;top:505.99px;width:26.00px;height:16.90px;"><svg width="26.00" height="16.90" fill="#30353a"><text x="0" y="12.35" font-size="13" font-weight="bold">着地</text></svg></div>
<div class="t " style="left:552.25px;top:505.99px;width:26.00px;height:16.90px;"><svg width="26.00" height="16.90" fill="#30353a"><text x="0" y="12.35" font-size="13" font-weight="bold">車賃</text></svg></div>
<div class="t " style="left:625.25px;top:505.99px;width:39.00px;height:16.90px;"><svg width="39.00" height="16.90" fill="#30353a"><text x="0" y="12.35" font-size="13" font-weight="bold">鉄道賃</text></svg></div>
<div class="t " style="left:705.75px;top:505.99px;width:39.00px;height:16.90px;"><svg width="39.00" height="16.90" fill="#30353a"><text x="0" y="12.35" font-size="13" font-weight="bold">急行料</text></svg></div>
<div class="t " style="left:785.25px;top:505.99px;width:39.00px;height:16.90px;"><svg width="39.00" height="16.90" fill="#30353a"><text x="0" y="12.35" font-size="13" font-weight="bold">航空費</text></svg></div>
<div class="t " style="left:871.50px;top:505.99px;width:26.00px;height:16.90px;"><svg width="26.00" height="16.90" fill="#30353a"><text x="0" y="12.35" font-size="13" font-weight="bold">船賃</text></svg></div>
<div class="t " style="left:951.60px;top:505.99px;width:26.00px;height:16.90px;"><svg width="26.00" height="16.90" fill="#30353a"><text x="0" y="12.35" font-size="13" font-weight="bold">日当</text></svg></div>
<div class="t " style="left:1025.10px;top:505.99px;width:39.00px;height:16.90px;"><svg width="39.00" height="16.90" fill="#30353a"><text x="0" y="12.35" font-size="13" font-weight="bold">宿泊料</text></svg></div>
<div class="t " style="left:1111.50px;top:505.99px;width:26.00px;height:16.90px;"><svg width="26.00" height="16.90" fill="#30353a"><text x="0" y="12.35" font-size="13" font-weight="bold">小計</text></svg></div>
<div style="position:absolute;left:45px;top:534.6px;width:1191px;height:2.4px;background:#30353a;"></div>
<div style="position:absolute;left:45px;top:580.8px;width:1191px;height:1px;background:#50555a;"></div>
<div class="box tb" style="left:90px;top:548.5px;width:107.25px;height:30px;"></div>
<svg class="i a" style="left:97.90px;top:568.60px" width="1" height="1"><text x="0" y="0" font-size="15.6" fill="#30353a" text-anchor="start" transform="scale(1.035,1)">2024-05-19</text></svg>
<div class="box tb" style="left:198.25px;top:548.5px;width:107.5px;height:30px;"></div>
<div class="t " style="left:206.05px;top:556.12px;width:56.00px;height:18.20px;"><svg width="56.00" height="18.20" fill="#3a3f44"><text x="0" y="13.3" font-size="14">南浜庁舎</text></svg></div>
<div class="box tb" style="left:307px;top:548.5px;width:107.25px;height:30px;"></div>
<div class="t " style="left:314.80px;top:556.12px;width:70.00px;height:18.20px;"><svg width="70.00" height="18.20" fill="#3a3f44"><text x="0" y="13.3" font-size="14">大都市空港</text></svg></div>
<div class="box tb" style="left:415.5px;top:548.5px;width:107px;height:30px;"></div>
<div class="t " style="left:423.30px;top:556.12px;width:42.00px;height:18.20px;"><svg width="42.00" height="18.20" fill="#3a3f44"><text x="0" y="13.3" font-size="14">大阪市</text></svg></div>
<div class="box tb" style="left:524px;top:548.5px;width:79.75px;height:30px;"></div>
<svg class="i a" style="left:596.15px;top:568.60px" width="1" height="1"><text x="0" y="0" font-size="15.6" fill="#30353a" text-anchor="end" transform="scale(1.02,1)">200</text></svg>
<div class="box tb" style="left:605.25px;top:548.5px;width:79.75px;height:30px;"></div>
<svg class="i a" style="left:677.40px;top:568.60px" width="1" height="1"><text x="0" y="0" font-size="15.6" fill="#30353a" text-anchor="end" transform="scale(1.02,1)">240</text></svg>
<div class="box tb" style="left:686.5px;top:548.5px;width:80px;height:30px;"></div>
<div class="t " style="left:716.50px;top:556.12px;width:42.00px;height:18.20px;"><svg width="42.00" height="18.20" fill="#8a8f94"><text x="0" y="13.3" font-size="14">急行料</text></svg></div>
<div class="box tb" style="left:768.25px;top:548.5px;width:80px;height:30px;"></div>
<svg class="i a" style="left:840.65px;top:568.60px" width="1" height="1"><text x="0" y="0" font-size="15.6" fill="#30353a" text-anchor="end" transform="scale(1.02,1)">59,400</text></svg>
<div class="box tb" style="left:849.5px;top:548.5px;width:80px;height:30px;"></div>
<div class="t " style="left:893.50px;top:556.12px;width:28.00px;height:18.20px;"><svg width="28.00" height="18.20" fill="#8a8f94"><text x="0" y="13.3" font-size="14">船賃</text></svg></div>
<div class="box tb" style="left:931px;top:548.5px;width:79.75px;height:30px;"></div>
<svg class="i a" style="left:1003.15px;top:568.60px" width="1" height="1"><text x="0" y="0" font-size="15.6" fill="#30353a" text-anchor="end" transform="scale(1.02,1)">2,000</text></svg>
<div class="box tb" style="left:1012px;top:548.5px;width:80px;height:30px;"></div>
<svg class="i a" style="left:1084.40px;top:568.60px" width="1" height="1"><text x="0" y="0" font-size="15.6" fill="#30353a" text-anchor="end" transform="scale(1.02,1)">12,000</text></svg>
<div class="box tb" style="left:1093.25px;top:548.5px;width:80.5px;height:30px;"></div>
<svg class="i a" style="left:1166.15px;top:568.60px" width="1" height="1"><text x="0" y="0" font-size="15.6" fill="#30353a" text-anchor="end" transform="scale(1.02,1)">73,840</text></svg>
<svg class="i" style="left:50px;top:552.5px" width="11.2" height="15" viewBox="0 0 11.2 15" ><path d="M5.7 1.2L11 6.5H8V14.4H3.2V6.5H0.4Z" fill="#bdd648"/><path d="M3.8 8.4H8V13H3.2V9Z" fill="#52a05a"/><path d="M5.7 0L6.8 1.4H4.6Z" fill="#e4ecd0"/><path d="M1.6 14.6h8.4" stroke="#dde3dd" stroke-width="0.8"/></svg>
<svg class="i" style="left:71px;top:552.5px" width="12" height="15" viewBox="0 0 12 15" ><path d="M4 0.5H8.7V6.8H11.9L6.3 13.9L0.7 6.8H4Z" fill="#bdd648"/><path d="M1.8 7.4H10.8L6.3 13.2Z" fill="#63ad52"/><path d="M2 14.6h8.4" stroke="#dde3dd" stroke-width="0.8"/></svg>
<svg class="i" style="left:1180px;top:552.5px" width="14.2" height="13.8" viewBox="0 0 14.2 13.8" ><path d="M5.5 0H8.7V5.2H14.2V8.4H8.7V13.8H5.5V8.4H0V5.2H5.5Z" fill="#bdd648"/><rect x="6" y="9.4" width="2.2" height="3.8" fill="#4d9d57"/></svg>
<svg class="i" style="left:1200.75px;top:553.75px" width="12.3" height="12.5" viewBox="0 0 12.3 12.5" ><path d="M2 2L10 10M10 2L2 10" stroke="#e6573f" stroke-width="3.5" stroke-linecap="round"/></svg>
<div class="box tb" style="left:90px;top:594.3px;width:107.25px;height:30px;"></div>
<svg class="i a" style="left:97.90px;top:614.40px" width="1" height="1"><text x="0" y="0" font-size="15.6" fill="#30353a" text-anchor="start" transform="scale(1.035,1)">2024-05-20</text></svg>
<div class="box tb" style="left:198.25px;top:594.3px;width:107.5px;height:30px;"></div>
<div class="t " style="left:206.05px;top:601.92px;width:42.00px;height:18.20px;"><svg width="42.00" height="18.20" fill="#3a3f44"><text x="0" y="13.3" font-size="14">大阪市</text></svg></div>
<div class="box tb" style="left:307px;top:594.3px;width:107.25px;height:30px;"></div>
<div class="t " style="left:314.80px;top:601.92px;width:56.00px;height:18.20px;"><svg width="56.00" height="18.20" fill="#3a3f44"><text x="0" y="13.3" font-size="14">伊丹空港</text></svg></div>
<div class="box tb" style="left:415.5px;top:594.3px;width:107px;height:30px;"></div>
<div class="t " style="left:423.30px;top:601.92px;width:56.00px;height:18.20px;"><svg width="56.00" height="18.20" fill="#3a3f44"><text x="0" y="13.3" font-size="14">南浜庁舎</text></svg></div>
<div class="box tb" style="left:524px;top:594.3px;width:79.75px;height:30px;"></div>
<svg class="i a" style="left:596.15px;top:614.40px" width="1" height="1"><text x="0" y="0" font-size="15.6" fill="#30353a" text-anchor="end" transform="scale(1.02,1)">200</text></svg>
<div class="box tb" style="left:605.25px;top:594.3px;width:79.75px;height:30px;"></div>
<svg class="i a" style="left:677.40px;top:614.40px" width="1" height="1"><text x="0" y="0" font-size="15.6" fill="#30353a" text-anchor="end" transform="scale(1.02,1)">240</text></svg>
<div class="box tb" style="left:686.5px;top:594.3px;width:80px;height:30px;"></div>
<div class="t " style="left:716.50px;top:601.92px;width:42.00px;height:18.20px;"><svg width="42.00" height="18.20" fill="#8a8f94"><text x="0" y="13.3" font-size="14">急行料</text></svg></div>
<div class="box tb" style="left:768.25px;top:594.3px;width:80px;height:30px;"></div>
<div class="t " style="left:798.25px;top:601.92px;width:42.00px;height:18.20px;"><svg width="42.00" height="18.20" fill="#8a8f94"><text x="0" y="13.3" font-size="14">航空費</text></svg></div>
<div class="box tb" style="left:849.5px;top:594.3px;width:80px;height:30px;"></div>
<div class="t " style="left:893.50px;top:601.92px;width:28.00px;height:18.20px;"><svg width="28.00" height="18.20" fill="#8a8f94"><text x="0" y="13.3" font-size="14">船賃</text></svg></div>
<div class="box tb" style="left:931px;top:594.3px;width:79.75px;height:30px;"></div>
<svg class="i a" style="left:1003.15px;top:614.40px" width="1" height="1"><text x="0" y="0" font-size="15.6" fill="#30353a" text-anchor="end" transform="scale(1.02,1)">2,000</text></svg>
<div class="box tb" style="left:1012px;top:594.3px;width:80px;height:30px;"></div>
<div class="t " style="left:1042.00px;top:601.92px;width:42.00px;height:18.20px;"><svg width="42.00" height="18.20" fill="#8a8f94"><text x="0" y="13.3" font-size="14">宿泊料</text></svg></div>
<div class="box tb" style="left:1093.25px;top:594.3px;width:80.5px;height:30px;"></div>
<svg class="i a" style="left:1166.15px;top:614.40px" width="1" height="1"><text x="0" y="0" font-size="15.6" fill="#30353a" text-anchor="end" transform="scale(1.02,1)">2,440</text></svg>
<svg class="i" style="left:50px;top:598.3px" width="11.2" height="15" viewBox="0 0 11.2 15" ><path d="M5.7 1.2L11 6.5H8V14.4H3.2V6.5H0.4Z" fill="#bdd648"/><path d="M3.8 8.4H8V13H3.2V9Z" fill="#52a05a"/><path d="M5.7 0L6.8 1.4H4.6Z" fill="#e4ecd0"/><path d="M1.6 14.6h8.4" stroke="#dde3dd" stroke-width="0.8"/></svg>
<svg class="i" style="left:71px;top:598.3px" width="12" height="15" viewBox="0 0 12 15" ><path d="M4 0.5H8.7V6.8H11.9L6.3 13.9L0.7 6.8H4Z" fill="#bdd648"/><path d="M1.8 7.4H10.8L6.3 13.2Z" fill="#63ad52"/><path d="M2 14.6h8.4" stroke="#dde3dd" stroke-width="0.8"/></svg>
<svg class="i" style="left:1180px;top:598.3px" width="14.2" height="13.8" viewBox="0 0 14.2 13.8" ><path d="M5.5 0H8.7V5.2H14.2V8.4H8.7V13.8H5.5V8.4H0V5.2H5.5Z" fill="#bdd648"/><rect x="6" y="9.4" width="2.2" height="3.8" fill="#4d9d57"/></svg>
<svg class="i" style="left:1200.75px;top:599.55px" width="12.3" height="12.5" viewBox="0 0 12.3 12.5" ><path d="M2 2L10 10M10 2L2 10" stroke="#e6573f" stroke-width="3.5" stroke-linecap="round"/></svg>
</body></html>
